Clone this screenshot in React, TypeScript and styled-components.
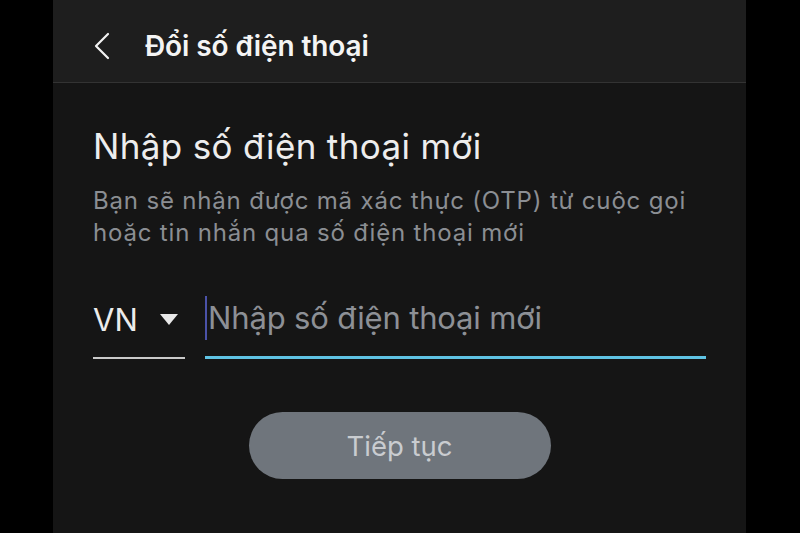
import React from "react";
import styled, { createGlobalStyle } from "styled-components";

const Global = createGlobalStyle`
  html, body { margin: 0; padding: 0; background: #000; }
  body { font-family: Inter, "Noto Sans", "DejaVu Sans", sans-serif; -webkit-font-smoothing: antialiased; }
  * { box-sizing: border-box; }
`;

const Screen = styled.div`
  width: 800px;
  height: 533px;
  background: #000;
  display: flex;
  padding-left: 53px;
  overflow: hidden;
`;

const Panel = styled.div`
  width: 693px;
  height: 100%;
  background: #151515;
  display: flex;
  flex-direction: column;
`;

const Header = styled.header`
  height: 83px;
  background: #1e1e1e;
  border-bottom: 1px solid #333333;
  display: flex;
  align-items: center;
  padding: 10px 0 0 38px;
  gap: 32px;
`;

const BackButton = styled.button`
  background: none;
  border: 0;
  padding: 0;
  width: 22px;
  height: 28px;
  display: flex;
  align-items: center;
  justify-content: center;
  color: #f2f2f2;
  cursor: pointer;
`;

const Title = styled.h1`
  margin: 0;
  font-size: 28px;
  font-weight: 600;
  color: #f4f4f4;
  letter-spacing: -0.1px;
`;

const Content = styled.main`
  padding: 0 40px;
  display: flex;
  flex-direction: column;
`;

const Heading = styled.h2`
  margin: 42px 0 0;
  font-size: 35px;
  line-height: 42px;
  font-weight: 400;
  color: #ededed;
  letter-spacing: 0.35px;
`;

const Description = styled.p`
  margin: 18px 0 0;
  font-size: 24px;
  line-height: 32px;
  color: #8b8e93;
  letter-spacing: 0.82px;
`;

const InputRow = styled.div`
  margin-top: 42px;
  display: flex;
  align-items: flex-end;
  gap: 20px;
`;

const CountrySelect = styled.div`
  width: 92px;
  height: 66px;
  display: flex;
  align-items: center;
  gap: 22px;
  border-bottom: 2px solid #c9c9c9;
  color: #ececec;
  font-size: 31px;
  padding-bottom: 12px;
`;

const Caret = styled.span`
  width: 0;
  height: 0;
  border-left: 9px solid transparent;
  border-right: 9px solid transparent;
  border-top: 11px solid #e8e8e8;
`;

const PhoneField = styled.div`
  flex: 1;
  height: 68px;
  border-bottom: 3px solid #5fc3e4;
  display: flex;
  align-items: center;
  padding-bottom: 12px;
`;

const Cursor = styled.span`
  width: 2px;
  height: 44px;
  background: #4b52a8;
  margin-right: 1px;
`;

const PhoneInput = styled.input`
  flex: 1;
  background: transparent;
  border: 0;
  outline: none;
  font-family: inherit;
  font-size: 31px;
  letter-spacing: -0.15px;
  color: #ececec;
  padding: 0;
  caret-color: transparent;
  &::placeholder { color: #8d9096; }
`;

const Actions = styled.div`
  display: flex;
  justify-content: center;
  margin-top: 53px;
`;

const ContinueButton = styled.button`
  width: 302px;
  height: 67px;
  border: 0;
  border-radius: 34px;
  background: #6f757c;
  color: #c9ccd0;
  font-family: inherit;
  font-size: 27.5px;
  font-weight: 400;
  cursor: default;
`;

export default function App() {
  return (
    <>
      <Global />
      <Screen>
        <Panel>
          <Header>
            <BackButton aria-label="Quay lại">
              <svg width="18" height="28" viewBox="0 0 18 28" fill="none">
                <path d="M15 2 L3 14 L15 26" stroke="currentColor" strokeWidth="2.2" strokeLinecap="round" strokeLinejoin="round" />
              </svg>
            </BackButton>
            <Title>Đổi số điện thoại</Title>
          </Header>
          <Content>
            <Heading>Nhập số điện thoại mới</Heading>
            <Description>
              Bạn sẽ nhận được mã xác thực (OTP) từ cuộc gọi
              <br />
              hoặc tin nhắn qua số điện thoại mới
            </Description>
            <InputRow>
              <CountrySelect>
                <span>VN</span>
                <Caret />
              </CountrySelect>
              <PhoneField>
                <Cursor />
                <PhoneInput placeholder="Nhập số điện thoại mới" />
              </PhoneField>
            </InputRow>
            <Actions>
              <ContinueButton disabled>Tiếp tục</ContinueButton>
            </Actions>
          </Content>
        </Panel>
      </Screen>
    </>
  );
}
